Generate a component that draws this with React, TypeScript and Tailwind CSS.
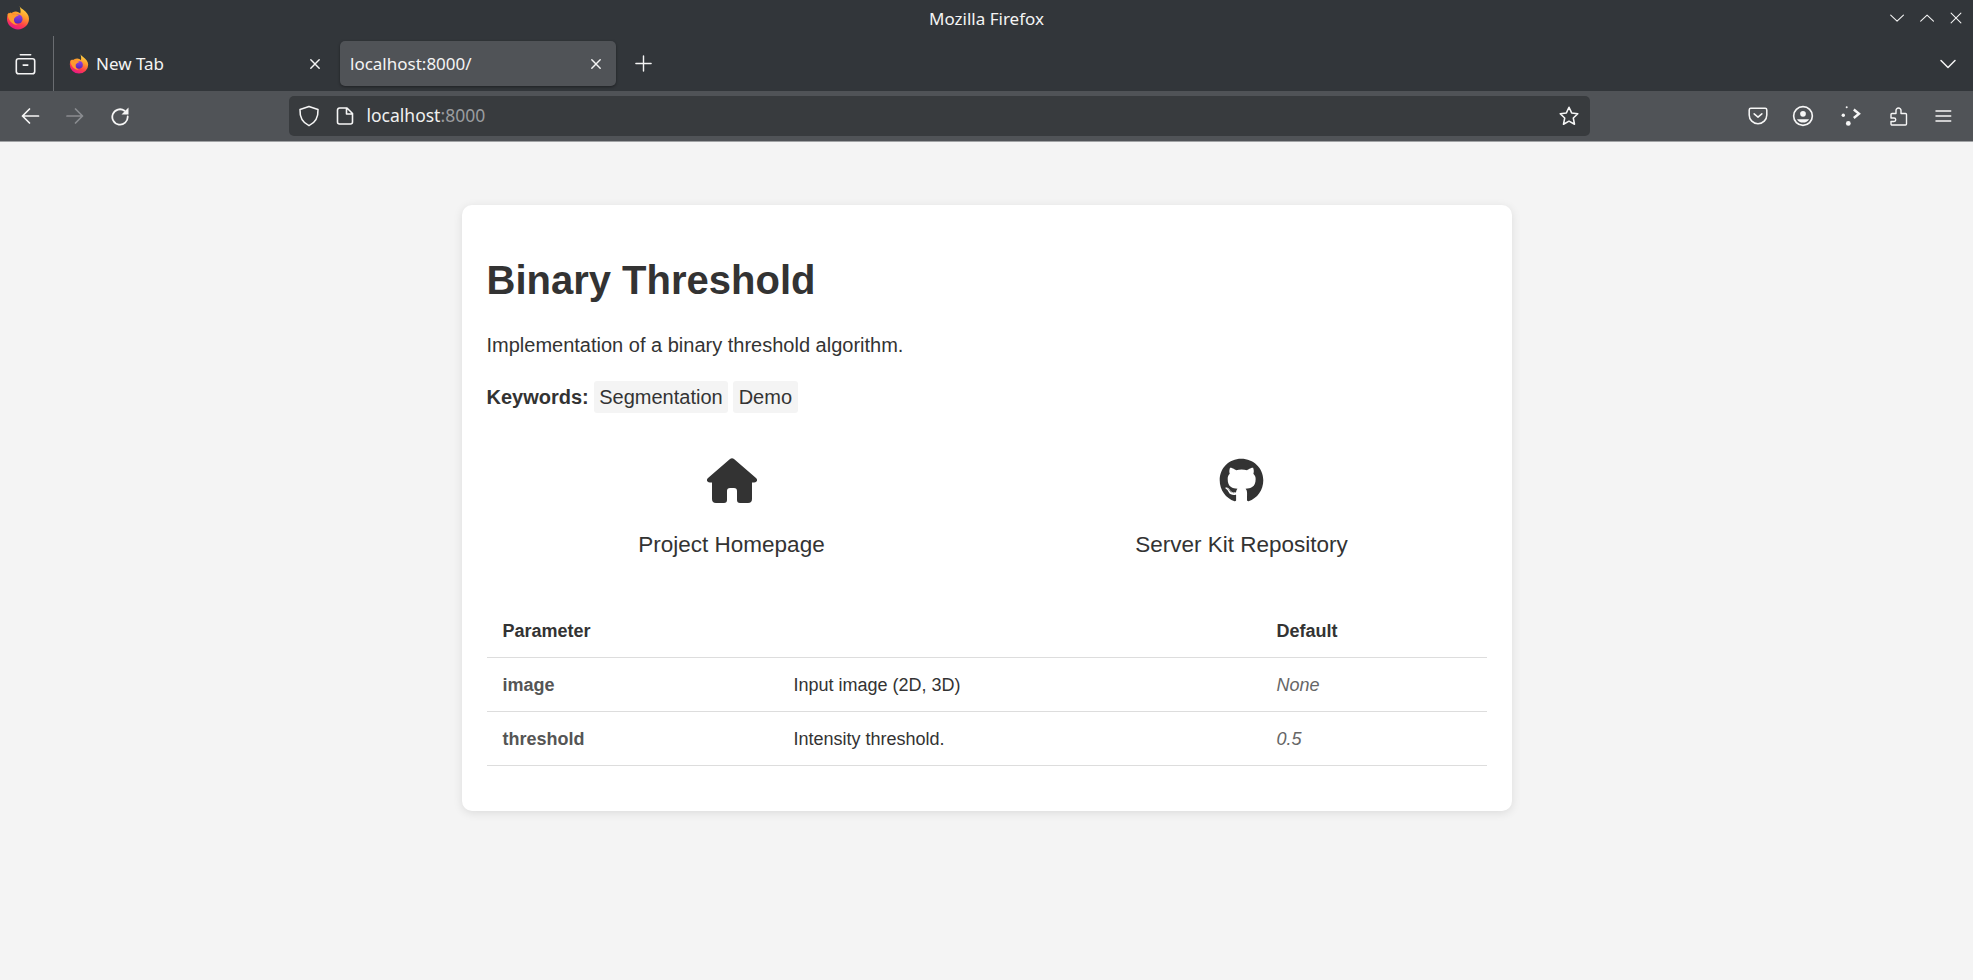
import { FaGithub } from "react-icons/fa";

const FirefoxLogo = ({ id, className }: { id: string; className: string }) => (
  <svg viewBox="0 0 24 24" className={className}>
    <defs>
      <linearGradient id={id + "a"} x1="0.75" y1="0" x2="0.35" y2="1">
        <stop offset="0" stopColor="#ffe14a" />
        <stop offset="0.4" stopColor="#ff9a2b" />
        <stop offset="0.72" stopColor="#ff3f4a" />
        <stop offset="1" stopColor="#e6148a" />
      </linearGradient>
      <linearGradient id={id + "b"} x1="0.5" y1="0" x2="0.5" y2="1">
        <stop offset="0" stopColor="#9a3fe0" />
        <stop offset="1" stopColor="#4f2bb8" />
      </linearGradient>
    </defs>
    <path
      d="M13.500 0c.5 1.500 2 2.500 3.500 3.500C20.500 6 23 9 23 12.800A11 10.700 0 0 1 1 12.800C1 10 2 8 3 6.500c.3 1 .7 1.500 1.200 2 1.500-2 3.500-3 5.500-3 2 0 3.500 1 4.500 2C15 5.500 14.500 2.500 13.500 0z"
      fill={`url(#${id}a)`}
    />
    <circle cx="12" cy="13" r="4.600" fill={`url(#${id}b)`} />
    <path d="M1.500 8L5 6.500 7 9c2-1 4-.5 6 .5-3 .5-4.500 2-5 3.500-.5 3 1 5 4 6-6 0-10-5-10.500-11z" fill="#ff9a2e" />
  </svg>
);

const HomeIcon = () => (
  <svg viewBox="0 0 50 45" className="w-[50px] h-[45px]" fill="#333">
    <path d="M23 1Q25-.5 27 1L49 20Q51 22 49.500 23.500 48.500 24.500 47 24.500H45V41Q45 45 41 45H33Q30 45 30 42V33Q30 30 27 30H23Q20 30 20 33V42Q20 45 17 45H9Q5 45 5 41V24.500H3Q1.500 24.500.5 23.500-1 22 1 20Z" />
  </svg>
);

const Ico = ({ children, className = "w-[20px] h-[20px]" }: { children: React.ReactNode; className?: string }) => (
  <svg viewBox="0 0 20 20" fill="none" stroke="currentColor" strokeWidth="1.500" strokeLinecap="round" strokeLinejoin="round" className={className}>
    {children}
  </svg>
);

const CloseIcon = () => (
  <Ico className="w-[12px] h-[12px]">
    <path d="M3 3l14 14M17 3L3 17" strokeWidth="2.400" />
  </Ico>
);

const sans = "font-['Noto_Sans','Open_Sans',sans-serif]";

const TitleBar = () => (
  <div className="grid grid-cols-3 items-center h-[36px] px-[6px] text-[#f4f4f4]">
    <FirefoxLogo id="ffa" className="w-[24px] h-[24px]" />
    <div className={`text-center text-[17px] pt-[2px] ${sans}`}>Mozilla Firefox</div>
    <div className="flex justify-end items-center gap-[13px] pr-[4px]">
      <Ico className="w-[17px] h-[17px]"><path d="M2 6l7.500 7L17 6" strokeWidth="1.300" /></Ico>
      <Ico className="w-[17px] h-[17px]"><path d="M2 13l7.500-7L17 13" strokeWidth="1.300" /></Ico>
      <Ico className="w-[14px] h-[14px]"><path d="M3 3l14 14M17 3L3 17" strokeWidth="1.500" /></Ico>
    </div>
  </div>
);

const TabBar = () => (
  <div className={`flex h-[55px] text-[#f4f4f4] text-[17px] ${sans}`}>
    <div className="w-[54px] flex items-center justify-center border-r border-[#6a6d71]">
      <Ico className="w-[23px] h-[23px] -ml-[3px] mt-[2px]">
        <path d="M5.500 1.500h9" strokeWidth="1.400" />
        <rect x="2" y="5" width="16" height="13" rx="2" strokeWidth="1.400" />
        <path d="M8 10.500h4" strokeWidth="1.400" />
      </Ico>
    </div>
    <div className="w-[286px] flex items-center pl-[15px] pr-[19px]">
      <FirefoxLogo id="ffb" className="w-[20px] h-[20px] mr-[7px]" />
      <span className="flex-1">New Tab</span>
      <CloseIcon />
    </div>
    <div className="flex items-center h-[45px] mt-[5px] w-[276px] rounded-[5px] bg-[#505357] shadow-[0_1px_3px_rgba(0,0,0,0.4)] pl-[10px] pr-[14px]">
      <span className="flex-1">localhost:8000/</span>
      <CloseIcon />
    </div>
    <div className="flex-1 flex items-center pl-[18px]">
      <Ico className="w-[19px] h-[19px]"><path d="M10 2v16M2 10h16" /></Ico>
    </div>
    <div className="flex items-center pr-[15px]">
      <Ico className="w-[20px] h-[20px]"><path d="M3 6.500l7 7 7-7" /></Ico>
    </div>
  </div>
);

const NavBar = () => (
  <div className={`flex items-center h-[51px] pb-[1px] bg-[#505357] border-b border-[#a0a2a4] text-[#f6f6f6] ${sans}`}>
    <div className="w-[289px] flex items-center pl-[20px] gap-[25px]">
      <Ico><path d="M18.500 10H2.500M9.500 3l-7 7 7 7" strokeWidth="1.700" /></Ico>
      <Ico className="w-[20px] h-[20px] text-[#8a8c90]"><path d="M2 10h15.500M10.500 3l7 7-7 7" strokeWidth="1.700" /></Ico>
      <Ico>
        <path d="M14.500 4.700a7.700 7.700 0 1 0 3.200 5.800" strokeWidth="1.800" />
        <path d="M18.500 1.500v7h-7z" fill="currentColor" stroke="none" />
      </Ico>
    </div>
    <div className="w-[1301px] h-[40px] rounded-[5px] bg-[#383b3e] flex items-center pl-[8px] pr-[10px]">
      <Ico className="w-[24px] h-[24px]">
        <path d="M10 2l7.500 2.500c.3 6.500-1.800 11-7.500 13.500C4.300 15.500 2.200 11 2.500 4.500L10 2z" strokeWidth="1.300" />
      </Ico>
      <Ico className="w-[20px] h-[20px] ml-[13.500px]">
        <path d="M2.500 4A2 2 0 0 1 4.500 2h7.500l5.500 5.500V16a2 2 0 0 1-2 2h-11a2 2 0 0 1-2-2zM11.500 2.500V8h5.500" strokeWidth="1.600" />
      </Ico>
      <span className="ml-[12px] text-[17.500px] text-[#f0f0f0] flex-1">
        localhost<span className="text-[#9a9c9f]">:8000</span>
      </span>
      <Ico className="w-[22px] h-[22px]">
        <path d="M10 2l2.400 5.200 5.600.7-4.100 3.900 1.100 5.700-5-2.800-5 2.800 1.100-5.700L2 7.900l5.600-.7z" strokeWidth="1.400" />
      </Ico>
    </div>
    <div className="flex-1 flex items-center pl-[158px]">
      <Ico className="w-[22px] h-[22px] -ml-[1px]">
        <path d="M3.500 3h13A1.500 1.500 0 0 1 18 4.500V9a8 8 0 0 1-16 0V4.500A1.500 1.500 0 0 1 3.500 3z" strokeWidth="1.400" />
        <path d="M6.500 8l3.500 3L13.500 8" strokeWidth="1.400" />
      </Ico>
      <Ico className="w-[22px] h-[22px] ml-[23px]">
        <circle cx="10" cy="10" r="8.500" />
        <circle cx="10" cy="8" r="2.600" fill="currentColor" stroke="none" />
        <path d="M4.500 13h11c-1.200 2.200-3 3-5.500 3s-4.300-.8-5.500-3z" fill="currentColor" stroke="none" />
      </Ico>
      <Ico className="w-[20px] h-[20px] ml-[27px]">
        <circle cx="2.300" cy="9.300" r="1.700" fill="currentColor" stroke="none" />
        <circle cx="5.700" cy="1.200" r="1" fill="currentColor" stroke="none" />
        <circle cx="7.300" cy="17.400" r="2.400" fill="currentColor" stroke="none" />
        <path d="M12.800 3.500L18 7.700l-5.200 4.300" strokeWidth="2.400" strokeLinecap="butt" strokeLinejoin="miter" />
      </Ico>
      <Ico className="w-[20px] h-[20px] ml-[28px]">
        <path d="M7 7.500V4.500A2.500 2.500 0 0 1 9.500 2 2.500 2.500 0 0 1 12 4.500v3h4.500a1 1 0 0 1 1 1V18a1 1 0 0 1-1 1H3a1 1 0 0 1-1-1v-2.500h3a1.500 1.500 0 0 0 0-3.500H2V8.500a1 1 0 0 1 1-1z" strokeWidth="1.400" />
      </Ico>
      <Ico className="w-[20px] h-[20px] ml-[24px]"><path d="M3 5h14.700M3 10h14.700M3 15h14.700" /></Ico>
    </div>
  </div>
);

const Params = [
  { name: "image", desc: "Input image (2D, 3D)", def: "None" },
  { name: "threshold", desc: "Intensity threshold.", def: "0.5" },
];

const App = () => (
  <div className="h-screen flex flex-col overflow-hidden bg-[#f4f4f4] font-['Liberation_Sans',Arial,sans-serif] text-[#333]">
    <div className="bg-[#32363a]">
      <TitleBar />
      <TabBar />
    </div>
    <NavBar />
    <div className="flex-1 flex justify-center items-start pt-[63px]">
      <div className="w-[1050px] bg-white rounded-[10px] shadow-[0_2px_10px_rgba(0,0,0,0.1)] p-[25px]">
        <h1 className="text-[40px] font-bold leading-[1.2] mt-[26px] mb-[25px]">Binary Threshold</h1>
        <p className="text-[20px] leading-[32px] mb-[20px]">Implementation of a binary threshold algorithm.</p>
        <div className="flex items-center text-[20px] leading-[32px] mb-[45px]">
          <b>Keywords:</b>
          <span className="bg-[#f4f4f4] rounded-[3px] px-[5.500px] ml-[5px]">Segmentation</span>
          <span className="bg-[#f4f4f4] rounded-[3px] px-[5.500px] ml-[5px]">Demo</span>
        </div>
        <div className="grid grid-cols-2 gap-[20px] mb-[41px]">
          <div className="flex flex-col items-center gap-[24px]">
            <HomeIcon />
            <span className="text-[22.500px] leading-[35px]">Project Homepage</span>
          </div>
          <div className="flex flex-col items-center gap-[24px]">
            <FaGithub className="text-[45px]" />
            <span className="text-[22.500px] leading-[35px]">Server Kit Repository</span>
          </div>
        </div>
        <table className="w-full border-collapse text-[18px] mb-[20px]">
          <thead>
            <tr className="border-b border-[#ddd] h-[54px]">
              <th className="w-[291px] text-left font-bold px-[16px] pt-[3px]">Parameter</th>
              <th className="w-[483px] px-[16px]"></th>
              <th className="text-left font-bold px-[16px] pt-[3px]">Default</th>
            </tr>
          </thead>
          <tbody>
            {Params.map((p) => (
              <tr key={p.name} className="border-b border-[#ddd] h-[54px]">
                <td className="px-[16px] pt-[2px] font-bold text-[#555]">{p.name}</td>
                <td className="px-[16px] pt-[2px]">{p.desc}</td>
                <td className="px-[16px] pt-[2px] italic text-[#666]">{p.def}</td>
              </tr>
            ))}
          </tbody>
        </table>
      </div>
    </div>
  </div>
);

export default App;
